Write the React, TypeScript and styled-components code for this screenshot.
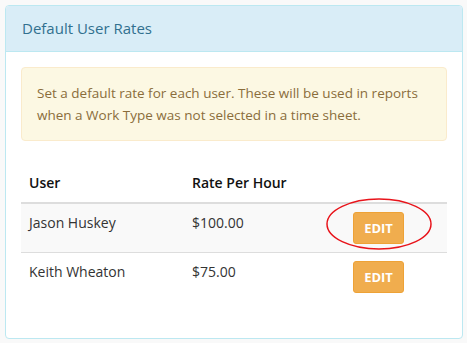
import React from 'react';
import styled, { createGlobalStyle } from 'styled-components';

const GlobalStyle = createGlobalStyle`
  html, body {
    margin: 0;
    padding: 0;
    background: #f9f9f9;
    font-family: "Open Sans", "Liberation Sans", sans-serif;
    color: #333;
  }
`;

const Page = styled.div`
  padding: 5px 4px 5px 5px;
`;

const Panel = styled.div`
  background: #fff;
  border: 1px solid #bce8f1;
  border-radius: 4px;
  overflow: hidden;
`;

const PanelHeading = styled.div`
  background: #d9edf7;
  border-bottom: 1px solid #bce8f1;
  color: #31708f;
  font-size: 15px;
  line-height: 21px;
  padding: 12px 16px;
`;

const PanelBody = styled.div`
  padding: 15px 15px 37px;
`;

const Alert = styled.div`
  background: #fcf8e3;
  border: 1px solid #faebcc;
  border-radius: 4px;
  color: #8a6d3b;
  font-size: 13.5px;
  line-height: 22px;
  padding: 14px 15px 14px 15px;
  margin-bottom: 23px;
`;

const Row = styled.div<{ $head?: boolean; $striped?: boolean }>`
  display: grid;
  grid-template-columns: 163px 161px 1fr;
  background: ${({ $striped }) => ($striped ? '#f9f9f9' : 'transparent')};
  border-bottom: ${({ $head }) => ($head ? '2px solid #ddd' : '1px solid #ddd')};
  font-size: 14px;
  line-height: 22px;
  color: ${({ $head }) => ($head ? '#111' : '#333')};
  font-weight: ${({ $head }) => ($head ? 600 : 400)};

  &:last-child {
    border-bottom: none;
  }
`;

const Cell = styled.div`
  padding: 8px;
  position: relative;
`;

const EditButton = styled.button`
  display: block;
  width: 51px;
  height: 32px;
  background: #f0ad4e;
  border: 1px solid #eea236;
  border-radius: 3px;
  color: #fff;
  font-family: "Open Sans", "Liberation Sans", sans-serif;
  font-weight: 700;
  font-size: 13px;
  padding: 0;
  cursor: pointer;
`;

const Circle = styled.svg`
  position: absolute;
  left: -20px;
  top: -7px;
  pointer-events: none;
`;

const users = [
  { name: 'Jason Huskey', rate: '$100.00', marked: true },
  { name: 'Keith Wheaton', rate: '$75.00', marked: false },
];

export default function App() {
  return (
    <>
      <GlobalStyle />
      <Page>
        <Panel>
          <PanelHeading>Default User Rates</PanelHeading>
          <PanelBody>
            <Alert>
              Set a default rate for each user. These will be used in reports when a Work Type
              was not selected in a time sheet.
            </Alert>
            <div>
              <Row $head>
                <Cell>User</Cell>
                <Cell>Rate Per Hour</Cell>
                <Cell />
              </Row>
              {users.map((u, i) => (
                <Row key={u.name} $striped={i % 2 === 0}>
                  <Cell>{u.name}</Cell>
                  <Cell>{u.rate}</Cell>
                  <Cell>
                    <EditButton>EDIT</EditButton>
                    {u.marked && (
                      <Circle width="108" height="54" viewBox="0 0 108 54">
                        <ellipse cx="54" cy="27" rx="52" ry="25" fill="none" stroke="#e8141b" strokeWidth="1.5" />
                      </Circle>
                    )}
                  </Cell>
                </Row>
              ))}
            </div>
          </PanelBody>
        </Panel>
      </Page>
    </>
  );
}
